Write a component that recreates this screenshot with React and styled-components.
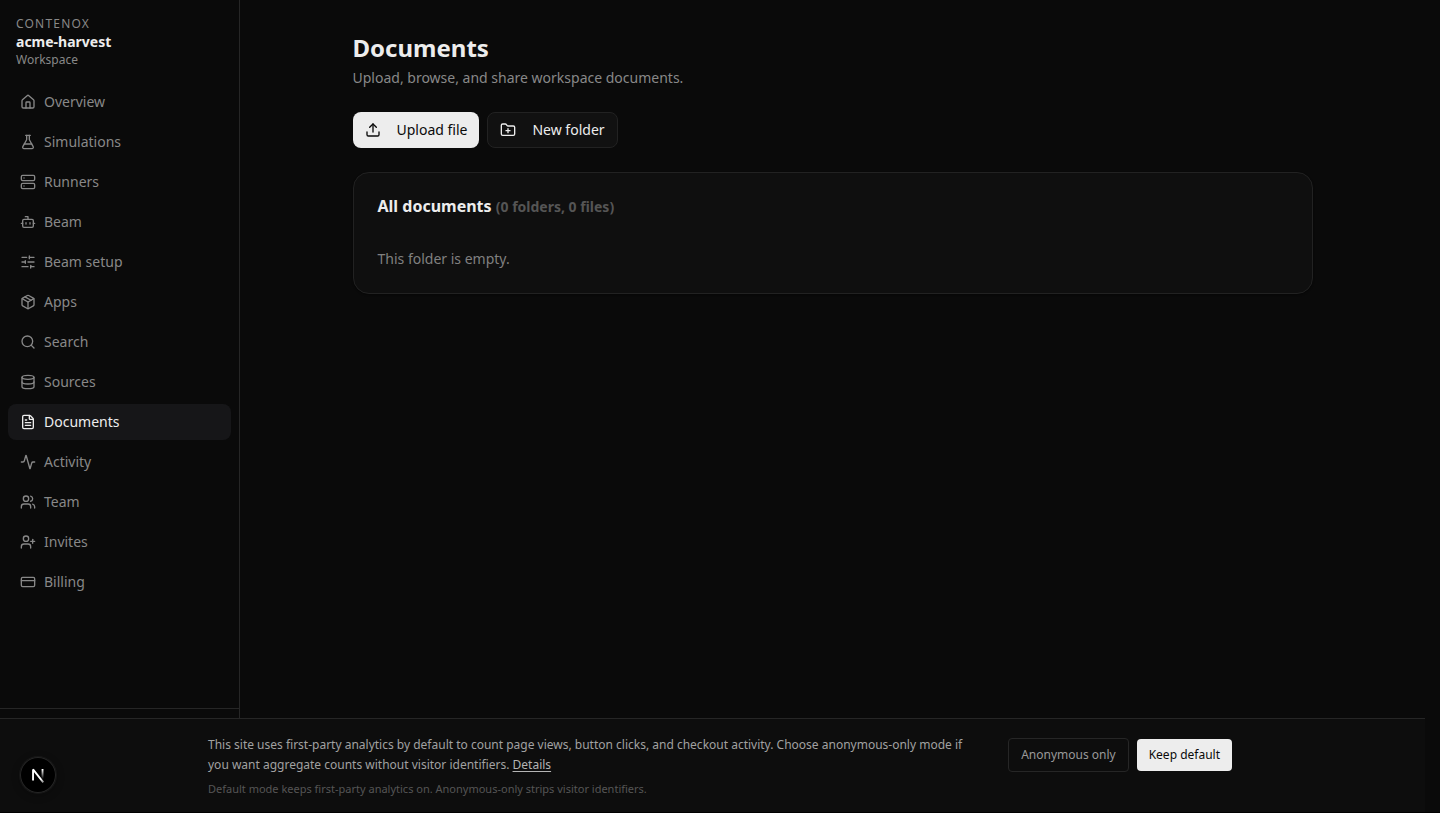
import styled, { createGlobalStyle } from "styled-components"
import {
  Activity,
  Bot,
  CreditCard,
  Database,
  FileText,
  FlaskConical,
  FolderPlus,
  House,
  Package,
  Search,
  Server,
  SlidersHorizontal,
  Upload,
  UserPlus,
  Users,
} from "lucide-react"

const links = [
  { label: "Overview", icon: House },
  { label: "Simulations", icon: FlaskConical },
  { label: "Runners", icon: Server },
  { label: "Beam", icon: Bot },
  { label: "Beam setup", icon: SlidersHorizontal },
  { label: "Apps", icon: Package },
  { label: "Search", icon: Search },
  { label: "Sources", icon: Database },
  { label: "Documents", icon: FileText },
  { label: "Activity", icon: Activity },
  { label: "Team", icon: Users },
  { label: "Invites", icon: UserPlus },
  { label: "Billing", icon: CreditCard },
];

function DevMark() {
  return (
    <DevBadge aria-label="Next.js dev tools">
      <svg width="36" height="36" viewBox="0 0 36 36" fill="none">
        <defs>
          <linearGradient id="diag" x1="9.95" y1="11.12" x2="14.6" y2="16.9" gradientUnits="userSpaceOnUse">
            <stop stopColor="#fff" />
            <stop offset="0.6" stopColor="#fff" stopOpacity="0.5" />
            <stop offset="1" stopColor="#fff" stopOpacity="0" />
          </linearGradient>
          <linearGradient id="bar" x1="11.8" y1="1.5" x2="11.8" y2="11" gradientUnits="userSpaceOnUse">
            <stop stopColor="#fff" />
            <stop offset="1" stopColor="#fff" stopOpacity="0" />
          </linearGradient>
        </defs>
        <g transform="translate(10.7 11)" strokeWidth="1.86" strokeLinejoin="bevel">
          <path d="M12.6 14.4 2.34 1.4v11.2" stroke="url(#diag)" />
          <path d="M11.825 1v11.6" stroke="url(#bar)" />
        </g>
      </svg>
    </DevBadge>
  );
}

export default function App() {
  return (
    <>
      <GlobalStyle />
      <Shell>
        <Sidebar>
          <Brand>
            <BrandName>Contenox</BrandName>
            <Workspace>acme-harvest</Workspace>
            <BrandHint>Workspace</BrandHint>
          </Brand>
          <Nav>
            {links.map(({ label, icon: Icon }) => (
              <NavItem key={label} href="#" $active={label === "Documents"}>
                <Icon size={16} />
                {label}
              </NavItem>
            ))}
          </Nav>
          <SidebarFooter />
        </Sidebar>

        <Main>
          <Content>
            <Title>Documents</Title>
            <Subtitle>Upload, browse, and share workspace documents.</Subtitle>
            <Actions>
              <Button $primary>
                <Upload size={16} />
                Upload file
              </Button>
              <Button>
                <FolderPlus size={16} />
                New folder
              </Button>
            </Actions>
            <Card>
              <CardTitle>
                All documents <span>(0 folders, 0 files)</span>
              </CardTitle>
              <Empty>This folder is empty.</Empty>
            </Card>
          </Content>
        </Main>
      </Shell>

      <Banner>
        <BannerText>
          <p>
            This site uses first-party analytics by default to count page views, button clicks, and
            checkout activity. Choose anonymous-only mode if you want aggregate counts without
            visitor identifiers. <a href="#">Details</a>
          </p>
          <small>
            Default mode keeps first-party analytics on. Anonymous-only strips visitor identifiers.
          </small>
        </BannerText>
        <BannerActions>
          <BannerButton>Anonymous only</BannerButton>
          <BannerButton $primary>Keep default</BannerButton>
        </BannerActions>
      </Banner>
      <DevMark />
    </>
  );
}

const GlobalStyle = createGlobalStyle`
  * {
    box-sizing: border-box;
    margin: 0;
  }

  html {
    background-color: #000000;
  }

  body {
    color: #ededed;
    font-family: "Noto Sans", sans-serif;
    font-size: 14px;
    line-height: 20px;
    overflow: hidden;
  }

  button {
    font-family: inherit;
    cursor: pointer;
  }
`;

const Shell = styled.div`
  display: flex;
  height: calc(100vh - 1px);
  padding-right: 15px;
  background-color: #0a0a0a;
`;

const Sidebar = styled.aside`
  display: flex;
  flex-direction: column;
  flex: none;
  width: 240px;
  border-right: 1px solid #262626;
`;

const Brand = styled.div`
  height: 84px;
  padding: 16px 16px 0;
`;

const BrandName = styled.p`
  font-size: 12px;
  line-height: 16px;
  letter-spacing: 1.2px;
  text-transform: uppercase;
  color: #888888;
`;

const Workspace = styled.p`
  font-weight: 700;
  color: #ededed;
`;

const BrandHint = styled.p`
  font-size: 12px;
  line-height: 16px;
  color: #888888;
`;

const Nav = styled.nav`
  display: flex;
  flex: 1;
  flex-direction: column;
  gap: 4px;
  padding: 0 8px;
`;

const NavItem = styled.a`
  display: flex;
  align-items: center;
  gap: 8px;
  height: 36px;
  padding: 0 12px;
  border-radius: 8px;
  text-decoration: none;
  color: ${(props) => (props.$active ? "#ededed" : "#888888")};
  background-color: ${(props) => (props.$active ? "#161618" : "transparent")};
`;

const SidebarFooter = styled.div`
  height: 104px;
  border-top: 1px solid #262626;
`;

const Main = styled.main`
  flex: 1;
  padding: 32px 24px;
`;

const Content = styled.div`
  max-width: 960px;
  margin: 0 auto;
`;

const Title = styled.h1`
  font-size: 24px;
  font-weight: 700;
  line-height: 32px;
`;

const Subtitle = styled.p`
  margin-top: 4px;
  color: #888888;
`;

const Actions = styled.div`
  display: flex;
  gap: 8px;
  margin: 24px 0;
`;

const Button = styled.button`
  display: flex;
  align-items: center;
  gap: 16px;
  height: 36px;
  padding: 0 12px;
  border: ${(props) => (props.$primary ? "none" : "1px solid #222222")};
  border-radius: 8px;
  font-size: 14px;
  line-height: 20px;
  color: ${(props) => (props.$primary ? "#0a0a0a" : "#ededed")};
  background-color: ${(props) => (props.$primary ? "#ededed" : "#111111")};
`;

const Card = styled.section`
  height: 122px;
  padding: 21px 24px;
  border: 1px solid #222222;
  border-radius: 16px;
  background-color: #0f0f0f;
  box-shadow: 0 1px 2px rgba(0, 0, 0, 0.4);
`;

const CardTitle = styled.h2`
  font-size: 16px;
  font-weight: 700;
  line-height: 24px;

  span {
    font-size: 14px;
    color: #555555;
  }
`;

const Empty = styled.p`
  margin-top: 30px;
  color: #808080;
`;

const Banner = styled.div`
  position: fixed;
  left: 0;
  right: 15px;
  bottom: 1px;
  display: flex;
  align-items: flex-start;
  justify-content: space-between;
  height: 94px;
  padding: 16px 193px 0 208px;
  border-top: 1px solid #262626;
  background-color: #0d0d0d;
`;

const BannerText = styled.div`
  width: 768px;
  font-size: 12px;
  color: #a1a1a1;

  a {
    color: #b4b4b4;
    text-underline-offset: 2px;
  }

  small {
    display: block;
    margin-top: 6px;
    font-size: 11px;
    line-height: 16px;
    color: #555555;
  }
`;

const BannerActions = styled.div`
  display: flex;
  align-items: center;
  gap: 8px;
  margin-top: 3px;
`;

const BannerButton = styled.button`
  height: ${(props) => (props.$primary ? "32px" : "34px")};
  padding: 0 12px;
  border: ${(props) => (props.$primary ? "none" : "1px solid #262626")};
  border-radius: 4px;
  font-size: 12px;
  line-height: 16px;
  color: ${(props) => (props.$primary ? "#0a0a0a" : "#999999")};
  background-color: ${(props) => (props.$primary ? "#ededed" : "transparent")};
`;

const DevBadge = styled.div`
  position: fixed;
  left: 20px;
  bottom: 20px;
  width: 36px;
  height: 36px;
  border-radius: 50%;
  background-color: #000000;
  box-shadow: 0 0 0 1px #171717, inset 0 0 0 1px #262626, 0 2px 8px rgba(0, 0, 0, 0.3);

  svg {
    display: block;
  }
`;
